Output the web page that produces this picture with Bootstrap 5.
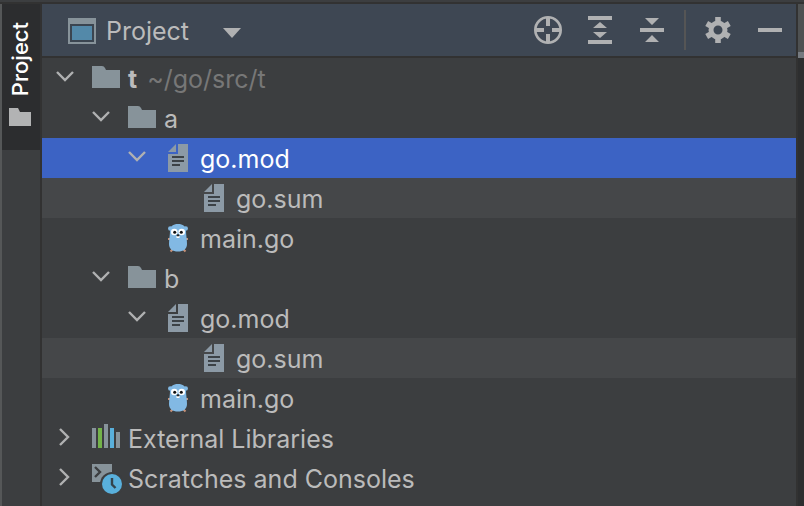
<!DOCTYPE html>
<html lang="en" data-bs-theme="dark">
<head>
<meta charset="utf-8">
<meta name="viewport" content="width=device-width, initial-scale=1">
<title>Project</title>
<link href="https://cdn.jsdelivr.net/npm/bootstrap@5.3.0/dist/css/bootstrap.min.css" rel="stylesheet">
<style>
  body { background: #3c3e40; color: #bbbbbb; font-family: Inter, "Liberation Sans", sans-serif; font-size: 25px; line-height: 40px; }
  button { background: none; border: 0; padding: 0; color: inherit; line-height: inherit; }
  svg { display: block; flex: none; }
  .top-edge { height: 4px; border-bottom: 2px solid #323232; }
  .stripe { width: 42px; border-left: 2px solid #555758; border-right: 2px solid #323232; }
  .stripe-tab { width: 100%; height: 146px; background: #2c2d2f; color: #fff; font-size: 22px; font-weight: 500; line-height: 36px; padding: 0 2px 22px 0; }
  .stripe-label { writing-mode: vertical-rl; transform: rotate(180deg); }
  .tool-head { height: 54px; background: #3e4753; border-bottom: 2px solid #323232; padding: 0 10px 0 24px; color: #bbbbbb; }
  .tool-head .divider { width: 2px; height: 40px; margin: 0 16px; background: #555555; }
  .tool-title { padding: 1px 2px 0 8px; }
  .tool-gap { gap: 20px; }
  .tree-row { height: 40px; padding-left: 8px; white-space: nowrap; }
  .tree-row.level-1 { padding-left: 44px; }
  .tree-row.level-2 { padding-left: 80px; }
  .tree-row.level-3 { padding-left: 116px; }
  .twisty { width: 40px; flex: none; }
  .tree-name { margin-left: 6px; padding-top: 1px; }
  .tree-path { color: #777777; margin-left: 10px; padding-top: 1px; }
  .is-selected { background: #3c63c4; color: #fff; }
  .is-tinted { background: #454749; }
  .editor-edge { width: 8px; border-left: 2px solid #323232; background: #2d2e2f; }
  .editor-tab { height: 54px; background: #4e5152; border-bottom: 6px solid #757a80; }
</style>
<script src="https://cdn.jsdelivr.net/npm/bootstrap@5.3.0/dist/js/bootstrap.bundle.min.js"></script>
</head>
<body>
<svg width="0" height="0" class="position-absolute" aria-hidden="true">
  <defs>
    <symbol id="i-down" viewBox="0 0 32 32"><path d="M7 10 15 18 23 10" fill="none" stroke="#b0b1b2" stroke-width="2.4"/></symbol>
    <symbol id="i-right" viewBox="0 0 32 32"><path d="M10 7 18 15 10 23" fill="none" stroke="#b0b1b2" stroke-width="2.4"/></symbol>
    <symbol id="i-folder" viewBox="0 0 32 32"><path d="M2 4H12Q14 4 15 6L16 8H30V26H2Z" fill="#87939a"/></symbol>
    <symbol id="i-file" viewBox="0 0 32 32"><path d="M14 2V10H6ZM16 2H26V30H6V12H16Z" fill="#8c9aa6"/><path d="M10 15H22M10 19H22M10 23H18" stroke="#3c4247" stroke-width="2"/></symbol>
    <symbol id="i-gopher" viewBox="0 0 32 32">
      <path d="M6 17H9M23 17H26M8.500 29.500 11 27M23.500 29.500 21 27" stroke="#c69076" stroke-width="2"/>
      <circle cx="8.300" cy="6.500" r="2.300" fill="#82b9e4"/><circle cx="23.700" cy="6.500" r="2.300" fill="#82b9e4"/>
      <path d="M8 9C8 4.500 11 2 16 2S24 4.500 24 9C24 13 25 17 25 22C25 27 21.500 29.500 16 29.500S7 27 7 22C7 17 8 13 8 9Z" fill="#82b9e4"/>
      <circle cx="12.300" cy="10" r="3.300" fill="#fff"/><circle cx="19.700" cy="10" r="3.300" fill="#fff"/>
      <circle cx="12.700" cy="10.200" r="1.500" fill="#111"/><circle cx="19.300" cy="10.200" r="1.500" fill="#111"/>
      <path d="M14.500 14H17.500V16H14.500Z" fill="#fff"/><ellipse cx="16" cy="13.300" rx="1.500" ry="1.100" fill="#222"/>
    </symbol>
  </defs>
</svg>

<div class="d-flex flex-column vh-100 overflow-hidden">
  <div class="top-edge flex-shrink-0"></div>
  <div class="d-flex flex-grow-1">
    <aside class="stripe flex-shrink-0">
      <button type="button" class="stripe-tab d-flex flex-column align-items-center justify-content-end">
        <span class="stripe-label">Project</span>
        <svg class="mt-2" width="24" height="24" viewBox="0 0 24 24"><path d="M1 4H10L12 8H23V22H1Z" fill="#b2b3b4"/></svg>
      </button>
    </aside>

    <main class="flex-grow-1">
      <header class="tool-head d-flex align-items-center">
        <button type="button" class="d-flex align-items-center">
          <svg width="32" height="32" viewBox="0 0 32 32"><path d="M2 4H30V30H2Z" fill="#87939a"/><path d="M4 10H28V28H4Z" fill="#3b4550"/><path d="M6 12H26V26H6Z" fill="#5389a9"/></svg>
          <span class="tool-title">Project</span>
          <svg class="ms-4" width="32" height="32" viewBox="0 0 32 32"><path d="M8 14H26L17 24Z" fill="#b0b1b2"/></svg>
        </button>
        <div class="d-flex align-items-center tool-gap ms-auto">
          <button type="button" aria-label="Select opened file">
            <svg width="32" height="32" viewBox="0 0 32 32" fill="none" stroke="#b0b1b2"><circle cx="16" cy="16" r="12.700" stroke-width="2.600"/><path d="M16 3V12M16 20V29M3 16H12M20 16H29" stroke-width="4"/></svg>
          </button>
          <button type="button" aria-label="Expand all">
            <svg width="32" height="32" viewBox="0 0 32 32"><path d="M4 2H28V6H4ZM4 26H28V30H4ZM9 14 16 8 23 14ZM9 18H23L16 24Z" fill="#b0b1b2"/></svg>
          </button>
          <button type="button" aria-label="Collapse all">
            <svg width="32" height="32" viewBox="0 0 32 32"><path d="M4 14H28V18H4ZM9 4H23L16 11ZM9 28 16 21 23 28Z" fill="#b0b1b2"/></svg>
          </button>
        </div>
        <span class="divider"></span>
        <div class="d-flex align-items-center tool-gap">
          <button type="button" aria-label="Options">
            <svg width="32" height="32" viewBox="0 0 32 32" fill="none" stroke="#b0b1b2"><circle cx="16" cy="16" r="7" stroke-width="5"/><path d="M16 3V8M16 24V29M4.700 9.500 9 12M23 20 27.300 22.500M4.700 22.500 9 20M23 12 27.300 9.500" stroke-width="5.600"/></svg>
          </button>
          <button type="button" aria-label="Hide">
            <svg width="32" height="32" viewBox="0 0 32 32"><path d="M4 14H28V18H4Z" fill="#b0b1b2"/></svg>
          </button>
        </div>
      </header>

      <ul class="list-unstyled mb-0" role="tree">
        <li class="tree-row d-flex align-items-center" role="treeitem" aria-expanded="true">
          <button type="button" class="twisty" aria-label="Collapse t"><svg width="32" height="32"><use href="#i-down"/></svg></button>
          <svg width="32" height="32"><use href="#i-folder"/></svg>
          <span class="tree-name fw-bold">t</span><span class="tree-path">~/go/src/t</span>
        </li>
        <li class="tree-row level-1 d-flex align-items-center" role="treeitem" aria-expanded="true">
          <button type="button" class="twisty" aria-label="Collapse a"><svg width="32" height="32"><use href="#i-down"/></svg></button>
          <svg width="32" height="32"><use href="#i-folder"/></svg>
          <span class="tree-name">a</span>
        </li>
        <li class="tree-row level-2 is-selected d-flex align-items-center" role="treeitem" aria-expanded="true" aria-selected="true">
          <button type="button" class="twisty" aria-label="Collapse go.mod"><svg width="32" height="32"><use href="#i-down"/></svg></button>
          <svg width="32" height="32"><use href="#i-file"/></svg>
          <span class="tree-name">go.mod</span>
        </li>
        <li class="tree-row level-3 is-tinted d-flex align-items-center" role="treeitem">
          <span class="twisty"></span>
          <svg width="32" height="32"><use href="#i-file"/></svg>
          <span class="tree-name">go.sum</span>
        </li>
        <li class="tree-row level-2 d-flex align-items-center" role="treeitem">
          <span class="twisty"></span>
          <svg width="32" height="32"><use href="#i-gopher"/></svg>
          <span class="tree-name">main.go</span>
        </li>
        <li class="tree-row level-1 d-flex align-items-center" role="treeitem" aria-expanded="true">
          <button type="button" class="twisty" aria-label="Collapse b"><svg width="32" height="32"><use href="#i-down"/></svg></button>
          <svg width="32" height="32"><use href="#i-folder"/></svg>
          <span class="tree-name">b</span>
        </li>
        <li class="tree-row level-2 d-flex align-items-center" role="treeitem" aria-expanded="true">
          <button type="button" class="twisty" aria-label="Collapse go.mod"><svg width="32" height="32"><use href="#i-down"/></svg></button>
          <svg width="32" height="32"><use href="#i-file"/></svg>
          <span class="tree-name">go.mod</span>
        </li>
        <li class="tree-row level-3 is-tinted d-flex align-items-center" role="treeitem">
          <span class="twisty"></span>
          <svg width="32" height="32"><use href="#i-file"/></svg>
          <span class="tree-name">go.sum</span>
        </li>
        <li class="tree-row level-2 d-flex align-items-center" role="treeitem">
          <span class="twisty"></span>
          <svg width="32" height="32"><use href="#i-gopher"/></svg>
          <span class="tree-name">main.go</span>
        </li>
        <li class="tree-row d-flex align-items-center" role="treeitem" aria-expanded="false">
          <button type="button" class="twisty" aria-label="Expand External Libraries"><svg width="32" height="32"><use href="#i-right"/></svg></button>
          <svg width="32" height="32" viewBox="0 0 32 32"><path d="M2 6H6V26H2ZM14 2H18V26H14ZM26 10H30V26H26Z" fill="#87939a"/><path d="M8 6H12V26H8Z" fill="#73b34a"/><path d="M20 6H24V26H20Z" fill="#59b0dc"/></svg>
          <span class="tree-name">External Libraries</span>
        </li>
        <li class="tree-row d-flex align-items-center" role="treeitem" aria-expanded="false">
          <button type="button" class="twisty" aria-label="Expand Scratches and Consoles"><svg width="32" height="32"><use href="#i-right"/></svg></button>
          <svg width="32" height="32" viewBox="0 0 32 32"><path d="M2 2H22V20H2Z" fill="#87939a"/><path d="M5 5 10 10 5 15" fill="none" stroke="#3c3e40" stroke-width="2.400"/><circle cx="22" cy="22" r="12" fill="#3c3e40"/><circle cx="22" cy="22" r="10" fill="#59b0dc"/><path d="M22 16V22.500L25.500 26" fill="none" stroke="#34434c" stroke-width="2.400"/></svg>
          <span class="tree-name">Scratches and Consoles</span>
        </li>
      </ul>
    </main>

    <div class="editor-edge flex-shrink-0"><div class="editor-tab"></div></div>
  </div>
</div>
</body>
</html>
